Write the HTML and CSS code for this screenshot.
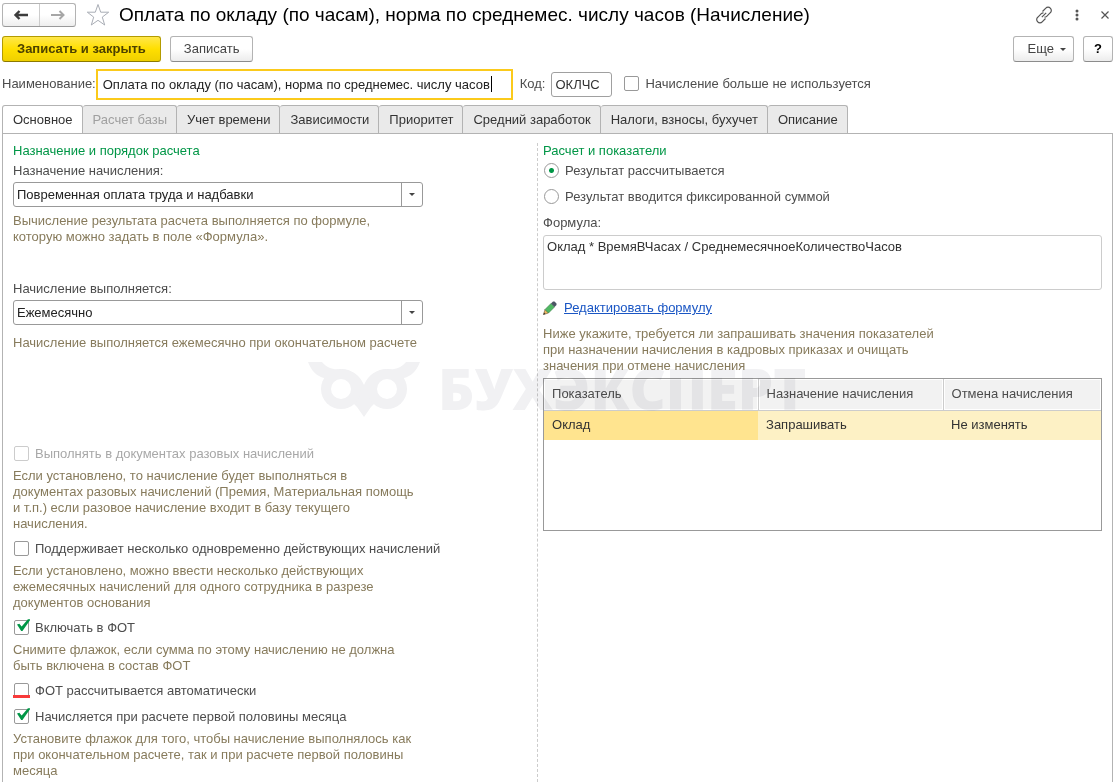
FILE: index.html
```
<!DOCTYPE html>
<html lang="ru">

<head>
	<meta charset="UTF-8">
	<meta name="viewport" content="width=device-width, initial-scale=1.0">
	<title>Оплата по окладу (по часам), норма по среднемес. числу часов (Начисление)</title>
	<link rel="stylesheet" href="styles.css">
</head>

<body>
	<header class="titlebar">
		<div class="nav">
			<button class="nav-btn" type="button" aria-label="Назад">
				<svg width="16" height="12" viewBox="0 0 16 12"><path d="M2 6h13M6.500 2L2.500 6l4 4" fill="none" stroke="#3c3c3c" stroke-width="2.400"/></svg>
			</button>
			<button class="nav-btn" type="button" aria-label="Вперед">
				<svg width="16" height="12" viewBox="0 0 16 12"><path d="M1 6h13M9.500 2l4 4-4 4" fill="none" stroke="#a6a6a6" stroke-width="2"/></svg>
			</button>
		</div>
		<button class="icon-btn" type="button" aria-label="В избранное">
			<svg width="24" height="24" viewBox="0 0 24 24"><path d="M12 1.500l2.700 7.700h8l-6.400 4.900 2.400 7.900L12 17.300 5.300 22l2.400-7.900L1.300 9.200h8z" fill="#fff" stroke="#a9adb5"/></svg>
		</button>
		<h1 class="title">Оплата по окладу (по часам), норма по среднемес. числу часов (Начисление)</h1>
		<div class="window-tools">
			<button class="icon-btn" type="button" aria-label="Ссылка">
				<svg width="18" height="18" viewBox="0 0 18 18" fill="none" stroke="#555" stroke-width="1.200"><path d="M7.500 5.500l3.300-3.300a3 3 0 0 1 4.500 0 3 3 0 0 1 0 4.500l-3.600 3.600a3 3 0 0 1-2.200.9"/><path d="M10.500 12.500l-3.300 3.300a3 3 0 0 1-4.500 0 3 3 0 0 1 0-4.500l3.600-3.600a3 3 0 0 1 2.200-.9"/><path d="M6.800 11.200l4.400-4.400"/></svg>
			</button>
			<button class="icon-btn" type="button" aria-label="Меню">
				<svg width="4" height="12" viewBox="0 0 4 12" fill="#555"><circle cx="2" cy="2" r="1.500"/><circle cx="2" cy="6" r="1.500"/><circle cx="2" cy="10" r="1.500"/></svg>
			</button>
			<button class="icon-btn" type="button" aria-label="Закрыть">
				<svg width="8" height="8" viewBox="0 0 8 8"><path d="M.5.5l7 7M7.500.5l-7 7" stroke="#555" stroke-width="1.200"/></svg>
			</button>
		</div>
	</header>

	<div class="toolbar">
		<button class="btn btn-main" type="button">Записать и закрыть</button>
		<button class="btn" type="button">Записать</button>
		<button class="btn btn-more" type="button">Еще <span class="arrow"></span></button>
		<button class="btn btn-help" type="button">?</button>
	</div>

	<div class="name-row">
		<label for="name">Наименование:</label>
		<input class="name-input" type="text" id="name" value="Оплата по окладу (по часам), норма по среднемес. числу часов">
		<label class="code-label" for="code">Код:</label>
		<input class="code-input" type="text" id="code" value="ОКЛЧС">
		<label class="check"><input type="checkbox">Начисление больше не используется</label>
	</div>

	<div class="tabs" role="tablist">
		<button class="tab active" type="button" role="tab" aria-selected="true">Основное</button>
		<button class="tab" type="button" role="tab" disabled>Расчет базы</button>
		<button class="tab" type="button" role="tab">Учет времени</button>
		<button class="tab" type="button" role="tab">Зависимости</button>
		<button class="tab" type="button" role="tab">Приоритет</button>
		<button class="tab" type="button" role="tab">Средний заработок</button>
		<button class="tab" type="button" role="tab">Налоги, взносы, бухучет</button>
		<button class="tab" type="button" role="tab">Описание</button>
	</div>

	<main class="panel">
		<section class="column">
			<h2>Назначение и порядок расчета</h2>
			<div class="block">
				<label for="purpose">Назначение начисления:</label>
				<span class="combo">
					<select id="purpose">
						<option>Повременная оплата труда и надбавки</option>
					</select>
					<span class="combo-btn"><span class="arrow"></span></span>
				</span>
				<p class="hint">Вычисление результата расчета выполняется по формуле,<br>которую можно задать в поле «Формула».</p>
			</div>
			<div class="block block-period">
				<label for="period">Начисление выполняется:</label>
				<span class="combo">
					<select id="period">
						<option>Ежемесячно</option>
					</select>
					<span class="combo-btn"><span class="arrow"></span></span>
				</span>
				<p class="hint">Начисление выполняется ежемесячно при окончательном расчете</p>
			</div>
			<div class="checks">
				<label class="check disabled"><input type="checkbox" disabled>Выполнять в документах разовых начислений</label>
				<p class="hint">Если установлено, то начисление будет выполняться в<br>документах разовых начислений (Премия, Материальная помощь<br>и т.п.) если разовое начисление входит в базу текущего<br>начисления.</p>
				<label class="check"><input type="checkbox">Поддерживает несколько одновременно действующих начислений</label>
				<p class="hint">Если установлено, можно ввести несколько действующих<br>ежемесячных начислений для одного сотрудника в разрезе<br>документов основания</p>
				<label class="check"><input type="checkbox" checked>Включать в ФОТ</label>
				<p class="hint">Снимите флажок, если сумма по этому начислению не должна<br>быть включена в состав ФОТ</p>
				<label class="check"><input class="marked" type="checkbox">ФОТ рассчитывается автоматически</label>
				<label class="check"><input type="checkbox" checked>Начисляется при расчете первой половины месяца</label>
				<p class="hint">Установите флажок для того, чтобы начисление выполнялось как<br>при окончательном расчете, так и при расчете первой половины<br>месяца</p>
			</div>
		</section>

		<section class="column column-right">
			<h2>Расчет и показатели</h2>
			<div class="radios">
				<label class="check"><input type="radio" name="result" checked>Результат рассчитывается</label>
				<label class="check"><input type="radio" name="result">Результат вводится фиксированной суммой</label>
			</div>
			<label class="formula-label" for="formula">Формула:</label>
			<textarea id="formula" readonly>Оклад * ВремяВЧасах / СреднемесячноеКоличествоЧасов</textarea>
			<div class="edit">
				<svg width="14" height="14" viewBox="0 0 14 14"><path d="M.5 13.500l1.500-5 3.500 3.500z" fill="#f0b860" stroke="#6b5636" stroke-width=".6"/><path d="M2 8.500L8 2.500 11.500 6l-6 6z" fill="#4fb963" stroke="#3d7a48" stroke-width=".6"/><path d="M8 2.500l2-2h1.500l2 2V4l-2 2z" fill="#4b5563"/><path d="M.3 13.700l.7-2.200 1.500 1.500z" fill="#333"/></svg>
				<a href="#">Редактировать формулу</a>
			</div>
			<p class="hint">Ниже укажите, требуется ли запрашивать значения показателей<br>при назначении начисления в кадровых приказах и очищать<br>значения при отмене начисления</p>
			<div class="grid">
				<table>
					<thead>
						<tr>
							<th>Показатель</th>
							<th>Назначение начисления</th>
							<th>Отмена начисления</th>
						</tr>
					</thead>
					<tbody>
						<tr>
							<td class="current">Оклад</td>
							<td>Запрашивать</td>
							<td>Не изменять</td>
						</tr>
					</tbody>
				</table>
			</div>
		</section>

		<div class="watermark" aria-hidden="true">
			<svg width="112" height="56" viewBox="0 0 112 56" fill="#f1f1f3">
				<path d="M0 0h14c5 6 11 8 19 7 10 0 19 6 23 16 4-10 13-16 23-16 8 1 14-1 19-7h14c-4 10-9 14-16 16l-17-3-12 12v16l-4 4-7 10-7-10-4-4V25L33 13l-17 3C9 14 4 10 0 0z"/>
				<circle cx="33" cy="27" r="20"/>
				<circle cx="79" cy="27" r="20"/>
				<circle cx="33" cy="27" r="10" fill="#fff"/>
				<circle cx="79" cy="27" r="10" fill="#fff"/>
			</svg>
			<span>БУХЭКСПЕРТ</span>
		</div>
	</main>
</body>

</html>
```
FILE: styles.css
```
*
{
	box-sizing: border-box;
}

body
{
	margin: 0;
	padding: 0 2px;
	min-height: 100vh;
	display: flex;
	flex-direction: column;
	background-color: #ffffff;
	color: #4d4d4d;
	font: 13px/16px "Liberation Sans", Arial, sans-serif;
}

h1,
h2,
p
{
	margin: 0;
	font-weight: normal;
}

button,
input,
select,
textarea
{
	font: inherit;
	color: #333333;
}

svg
{
	display: block;
}

.titlebar
{
	display: flex;
	align-items: center;
	height: 30px;
}

.nav
{
	display: flex;
	border: 1px solid #b3b3b3;
	border-bottom-color: #999999;
	border-radius: 3px;
	background: linear-gradient(#ffffff 50%, #eeeeee);
}

.nav-btn
{
	display: flex;
	align-items: center;
	justify-content: center;
	width: 36px;
	height: 22px;
	padding: 0;
	border: none;
	background: none;
}

.nav-btn + .nav-btn
{
	border-left: 1px solid #cccccc;
}

.icon-btn
{
	padding: 0;
	border: none;
	background: none;
}

.nav + .icon-btn
{
	margin-left: 10px;
}

.title
{
	margin-left: 9px;
	font-size: 19px;
	line-height: 24px;
	color: #000000;
	white-space: nowrap;
}

.window-tools
{
	display: flex;
	align-items: center;
	gap: 22px;
	margin-left: auto;
	padding-right: 4px;
}

.toolbar
{
	display: flex;
	gap: 9px;
	padding: 6px 0;
}

.btn
{
	height: 26px;
	padding: 0 13px;
	border: 1px solid #b3b3b3;
	border-bottom-color: #8c8c8c;
	border-radius: 3px;
	background: linear-gradient(#ffffff 50%, #ececec);
	color: #444444;
}

.btn-main
{
	padding: 0 14px;
	border-color: #b39b00;
	border-bottom-color: #8c7900;
	background: linear-gradient(#ffe74a, #ffdf00 50%, #efd000);
	color: #4d4200;
	font-weight: bold;
}

.btn-more
{
	display: flex;
	align-items: center;
	gap: 6px;
	margin-left: auto;
	padding: 0 7px 0 14px;
}

.btn-help
{
	width: 30px;
	padding: 0;
	color: #000000;
	font-weight: bold;
}

.arrow
{
	border: 3px solid transparent;
	border-top-color: #444444;
	border-bottom: none;
}

.name-row
{
	display: flex;
	align-items: center;
	height: 32px;
}

.name-input
{
	flex: 0 1 417px;
	height: 31px;
	padding: 0 5px;
	border: 2px solid #fbca1b;
	background: linear-gradient(#000000, #000000) no-repeat 393px center / 1px 16px;
	color: #222222;
}

.name-input:focus
{
	outline: none;
	background: none;
}

.code-label
{
	margin: 0 6px 0 7px;
}

.code-input
{
	width: 61px;
	height: 25px;
	margin-right: 11px;
	padding: 0 3px;
	border: 1px solid #a0a0a0;
	border-radius: 3px;
}

.check
{
	display: flex;
	align-items: flex-start;
	gap: 6px;
	height: 16px;
}

.check input
{
	appearance: none;
	position: relative;
	flex: none;
	width: 15px;
	height: 15px;
	margin: 0 0 0 1px;
	border: 1px solid #999999;
	border-radius: 2px;
	background-color: #ffffff;
}

.check input[type="radio"]
{
	border-radius: 50%;
}

.check input[type="radio"]:checked
{
	background-image: radial-gradient(#009646 2px, transparent 3px);
}

.check input[type="checkbox"]:checked::before
{
	content: "";
	position: absolute;
	top: -2px;
	left: 2px;
	width: 13px;
	height: 12px;
	background-color: #009646;
	clip-path: polygon(0 46%, 18% 40%, 36% 62%, 84% 2%, 100% 2%, 100% 10%, 42% 100%, 32% 100%);
}

.check input.marked::after
{
	content: "";
	position: absolute;
	left: -2px;
	right: -2px;
	bottom: -1px;
	height: 3px;
	background-color: #f83a3a;
}

.check.disabled
{
	color: #a8a8a8;
}

.check.disabled input
{
	border-color: #cccccc;
}

.tabs
{
	display: flex;
	margin-top: 5px;
}

.tab
{
	height: 28px;
	padding: 0 9px 0 10px;
	border: 1px solid #b3b3b3;
	border-bottom: none;
	border-left-width: 0;
	border-radius: 3px 3px 0 0;
	background-color: #eaeaea;
	color: #333333;
	white-space: nowrap;
}

.tab:disabled
{
	color: #a0a0a0;
}

.tab.active
{
	position: relative;
	height: 29px;
	margin-bottom: -1px;
	border-left-width: 1px;
	background-color: #ffffff;
}

.panel
{
	position: relative;
	flex: 1;
	display: grid;
	grid-template-columns: 535fr 576fr;
	padding-top: 9px;
	border: 1px solid #b3b3b3;
	border-bottom: none;
}

.column
{
	display: flex;
	flex-direction: column;
	gap: 4px;
	padding: 0 10px;
}

.column-right
{
	padding-left: 5px;
	border-left: 1px dashed #cccccc;
}

h2
{
	font-size: 13px;
	line-height: 16px;
	color: #009646;
}

.block
{
	display: flex;
	flex-direction: column;
	gap: 3px;
}

.block-period
{
	margin-top: 32px;
}

.combo
{
	display: flex;
	width: 410px;
	max-width: 100%;
	height: 25px;
	border: 1px solid #999999;
	border-radius: 3px;
}

.combo select
{
	appearance: none;
	flex: 1;
	padding: 0 3px;
	border: none;
	background: none;
	color: #222222;
}

.combo-btn
{
	display: flex;
	align-items: center;
	justify-content: center;
	width: 21px;
	border-left: 1px solid #999999;
}

.hint
{
	color: #877b5c;
}

.block .hint
{
	margin-top: 3px;
}

.block-period .hint
{
	margin-top: 7px;
}

.checks
{
	display: flex;
	flex-direction: column;
	gap: 10px;
	margin-top: 91px;
}

.checks .hint
{
	margin-top: -4px;
	margin-bottom: -1px;
}

.radios
{
	display: flex;
	flex-direction: column;
	gap: 10px;
}

.formula-label
{
	margin-top: 6px;
}

textarea
{
	display: block;
	width: 100%;
	height: 55px;
	padding: 3px;
	border: 1px solid #cccccc;
	border-radius: 3px;
	resize: none;
}

.edit
{
	display: flex;
	align-items: center;
	gap: 7px;
	margin: 6px 0;
}

.edit a
{
	color: #1a56c4;
}

.grid
{
	height: 153px;
	border: 1px solid #999999;
}

table
{
	width: 100%;
	table-layout: fixed;
	border-collapse: collapse;
}

th
{
	height: 31px;
	padding: 0 8px;
	border-right: 1px solid #cccccc;
	border-bottom: 1px solid #cccccc;
	background-color: #f2f2f2;
	box-shadow: inset 0 0 0 1px #ffffff;
	font-weight: normal;
	text-align: left;
}

th:first-child
{
	width: 214px;
}

th:nth-child(2)
{
	width: 185px;
}

th:last-child
{
	border-right: none;
}

td
{
	height: 30px;
	padding: 0 8px;
	background-color: #fdf1c5;
	color: #333333;
}

.current
{
	background-color: #ffe48f;
}

.watermark
{
	position: absolute;
	top: 228px;
	left: 305px;
	display: flex;
	align-items: flex-start;
	gap: 18px;
	color: #f1f1f3;
	font: 800 56px/52px "Open Sans", sans-serif;
	mix-blend-mode: multiply;
	pointer-events: none;
}
```
